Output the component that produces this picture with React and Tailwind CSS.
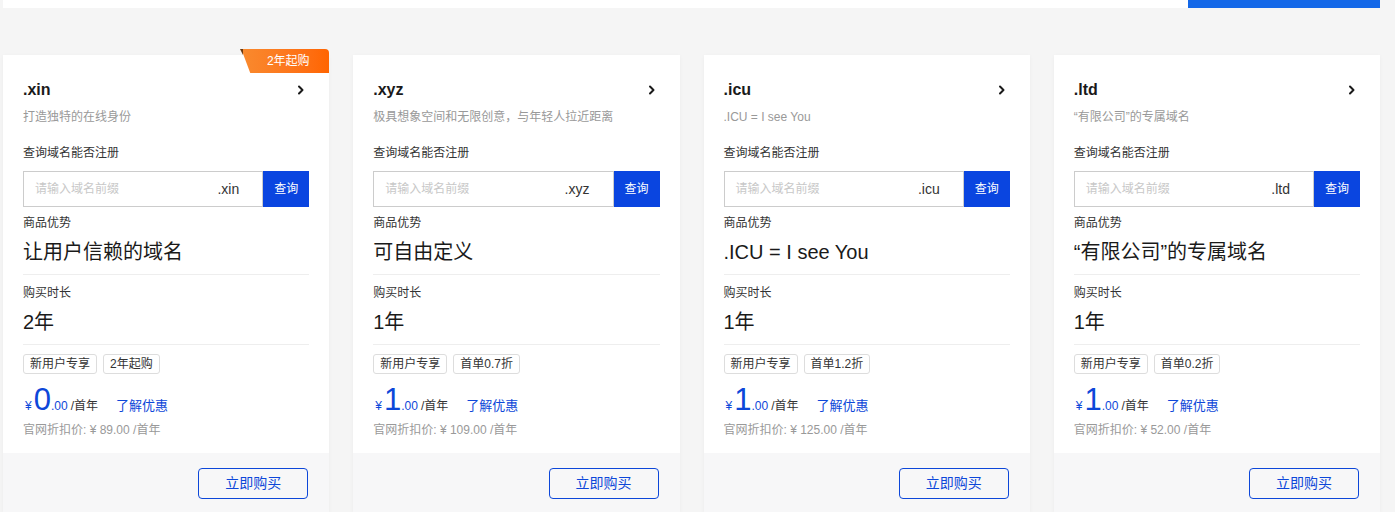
import React from "react";

const domains = [
  {
    name: ".xin",
    desc: "打造独特的在线身份",
    advantage: "让用户信赖的域名",
    years: "2年",
    tags: ["新用户专享", "2年起购"],
    price: "0",
    original: "89.00",
    badge: "2年起购",
  },
  {
    name: ".xyz",
    desc: "极具想象空间和无限创意，与年轻人拉近距离",
    advantage: "可自由定义",
    years: "1年",
    tags: ["新用户专享", "首单0.7折"],
    price: "1",
    original: "109.00",
  },
  {
    name: ".icu",
    desc: ".ICU = I see You",
    advantage: ".ICU = I see You",
    years: "1年",
    tags: ["新用户专享", "首单1.2折"],
    price: "1",
    original: "125.00",
  },
  {
    name: ".ltd",
    desc: "“有限公司”的专属域名",
    advantage: "“有限公司”的专属域名",
    years: "1年",
    tags: ["新用户专享", "首单0.2折"],
    price: "1",
    original: "52.00",
  },
];

const Chevron = () => (
  <svg width="12" height="12" viewBox="0 0 12 12" fill="none">
    <path
      d="M4 2.5 L7.5 6 L4 9.5"
      stroke="#1a1a1a"
      strokeWidth="2"
      strokeLinecap="round"
      strokeLinejoin="round"
    />
  </svg>
);

const DomainCard = ({ d }) => {
  return (
    <div className="relative bg-white flex flex-col shadow-[0_1px_4px_rgba(0,0,0,0.04)]">
      {d.badge && (
        <>
          <div className="absolute top-[-6px] right-0 w-[88px] h-[24px] rounded-tr-[4px] bg-gradient-to-r from-[#f98a2e] to-[#ff6500] [clip-path:polygon(0_0,100%_0,100%_100%,9px_100%)] flex items-center justify-center pl-[6px] text-white text-[12px] leading-none">
            {d.badge}
          </div>
          <div className="absolute top-[-6px] right-[86px] w-0 h-0 border-r-[3px] border-r-[#6b3a10] border-b-[6px] border-b-transparent" />
        </>
      )}
      <div className="px-5 pt-[24px] pb-[14px]">
        <div className="h-[22px] flex items-center justify-between">
          <span className="text-[16px] font-bold text-[#1a1a1a] leading-[22px]">
            {d.name}
          </span>
          <span className="mr-[2px]">
            <Chevron />
          </span>
        </div>
        <div className="mt-[7px] text-[12px] leading-[18px] text-[#999]">
          {d.desc}
        </div>
        <div className="mt-[18px] text-[12px] leading-[18px] text-[#333]">
          查询域名能否注册
        </div>
        <div className="mt-[9px] flex h-[36px]">
          <div className="flex-1 flex items-center border border-[#ccc] pl-[11px] pr-[23px]">
            <span className="flex-1 text-[12px] text-[#c8c8c8]">
              请输入域名前缀
            </span>
            <span className="text-[14px] text-[#333]">{d.name}</span>
          </div>
          <button className="w-[46px] bg-[#0a45e0] text-white text-[12px]">
            查询
          </button>
        </div>
        <div className="mt-[7px] text-[12px] leading-[18px] text-[#333]">
          商品优势
        </div>
        <div className="mt-[6px] text-[20px] leading-[28px] text-[#1a1a1a]">
          {d.advantage}
        </div>
        <div className="mt-[8px] border-t border-[#eee]" />
        <div className="mt-[9px] text-[12px] leading-[18px] text-[#333]">
          购买时长
        </div>
        <div className="mt-[6px] text-[20px] leading-[28px] text-[#1a1a1a]">
          {d.years}
        </div>
        <div className="mt-[8px] border-t border-[#eee]" />
        <div className="mt-[9px] flex gap-[6px]">
          {d.tags.map((t) => (
            <span
              key={t}
              className="h-[20px] px-[6px] flex items-center border border-[#ddd] rounded-[3px] text-[12px] text-[#333]"
            >
              {t}
            </span>
          ))}
        </div>
        <div className="mt-[11px] h-[30px] flex items-baseline text-[#0d47d9]">
          <span className="text-[12px] ml-[2px] mr-[2px]">¥</span>
          <span className="text-[31px] leading-[30px]">{d.price}</span>
          <span className="text-[12px]">.00</span>
          <span className="text-[12px] text-[#333] ml-[3px]">/首年</span>
          <span className="text-[13px] ml-[18px]">了解优惠</span>
        </div>
        <div className="mt-[6px] text-[12px] leading-[18px] text-[#999]">
          官网折扣价: ¥ {d.original} /首年
        </div>
      </div>
      <div className="bg-[#f7f7f8] flex justify-end pt-[15px] pb-[15px] pr-[21px]">
        <button className="w-[110px] h-[31px] border border-[#0d47d9] rounded-[4px] text-[14px] text-[#0d47d9] bg-transparent">
          立即购买
        </button>
      </div>
    </div>
  );
};

const App = () => {
  return (
    <div
      className="min-h-screen bg-[#f5f5f5] overflow-hidden"
      style={{ fontFamily: '"Liberation Sans", "Noto Sans CJK SC", sans-serif' }}
    >
      <div className="ml-[3px] w-[1377px] flex h-[8px]">
        <div className="flex-1 bg-white" />
        <div className="w-[192px] bg-[#1468e8]" />
      </div>
      <div className="ml-[3px] w-[1377px] mt-[47px] grid grid-cols-4 gap-[24px]">
        {domains.map((d) => (
          <DomainCard key={d.name} d={d} />
        ))}
      </div>
    </div>
  );
};

export default App;
